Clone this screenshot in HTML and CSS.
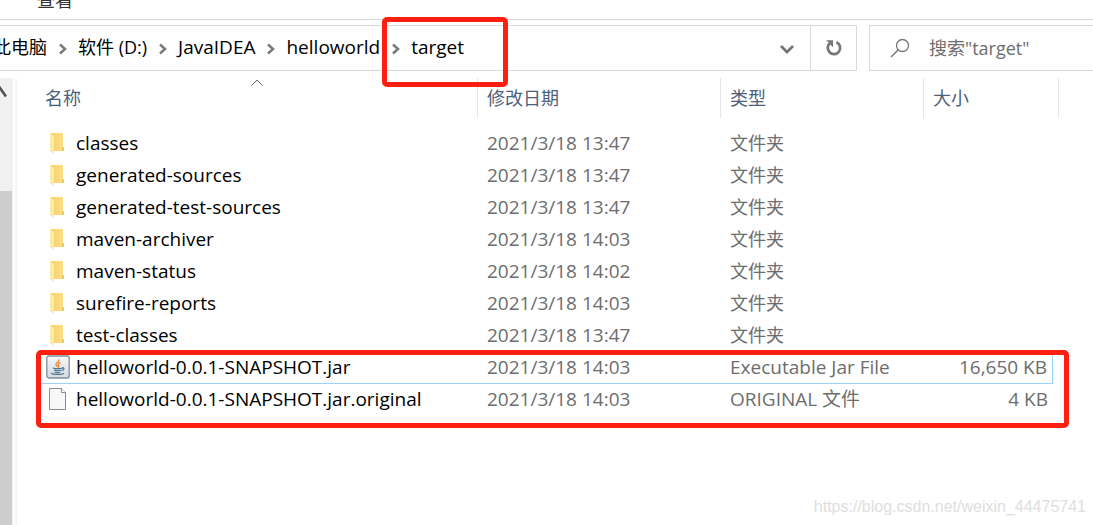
FILE: index.html
```html
<!DOCTYPE html>
<html lang="zh-CN">
<head>
<meta charset="utf-8">
<title>target</title>
<link rel="stylesheet" href="styles.css">
</head>
<body>
<svg class="defs" aria-hidden="true">
  <defs>
    <linearGradient id="fold" x1="0" x2="1"><stop offset="0" stop-color="#f5cf6b"/><stop offset="1" stop-color="#fbdf86"/></linearGradient>
    <linearGradient id="plate" x1="0" y1="0" x2="0" y2="1"><stop offset="0" stop-color="#f7f8f9"/><stop offset="1" stop-color="#d5dbe0"/></linearGradient>
    <symbol id="folder" viewBox="0 0 24 24">
      <path d="M4 2h13v18H8z" fill="url(#fold)"/>
      <path d="M16 16h2v4h-2z" fill="#eec967"/>
      <path d="M4 2l4 3v18l-4-3z" fill="#ffe9a6"/>
    </symbol>
    <symbol id="chevron" viewBox="0 0 8 12"><path d="M1 1.5l5 4.5-5 4.5" fill="none" stroke="#7c7c7c" stroke-width="2.6"/></symbol>
  </defs>
</svg>
<div class="explorer">
  <nav class="ribbon"><button class="tab" type="button">查看</button></nav>
  <div class="toolbar">
    <div class="address">
      <ol class="crumbs">
        <li><a href="#">此电脑</a><svg class="chev"><use href="#chevron"/></svg></li>
        <li><a href="#">软件 (D:)</a><svg class="chev"><use href="#chevron"/></svg></li>
        <li class="latin"><a href="#">JavaIDEA</a><svg class="chev"><use href="#chevron"/></svg></li>
        <li class="latin"><a href="#">helloworld</a><svg class="chev"><use href="#chevron"/></svg></li>
        <li class="latin"><a href="#">target</a></li>
      </ol>
      <button class="history" type="button" aria-label="历史记录"><svg width="16" height="12" viewBox="0 0 16 12"><path d="M2 3l6 6 6-6" fill="none" stroke="#747474" stroke-width="2.8"/></svg></button>
      <button class="refresh" type="button" aria-label="刷新"><svg width="18" height="18" viewBox="0 0 18 18"><path d="M11.500 3.200a6.200 6.200 0 1 1-6 .5" fill="none" stroke="#777" stroke-width="2.700"/><path d="M1 1.200h7v7L6 6.200 4.300 4z" fill="#777"/></svg></button>
    </div>
    <label class="search">
      <svg width="20" height="20" viewBox="0 0 20 20"><circle cx="12.500" cy="7.500" r="6" fill="none" stroke="#777" stroke-width="1.300"/><path d="M8.300 11.800L1 19" stroke="#777" stroke-width="1.500"/></svg>
      <input type="text" aria-label="搜索" placeholder="搜索&quot;target&quot;">
    </label>
  </div>
  <div class="main">
    <div class="scrollbar"><svg width="7" height="13" viewBox="0 0 7 13"><path d="M-5 10.500L0 3l6 8.500" fill="none" stroke="#505050" stroke-width="2.600"/></svg><div class="thumb"></div></div>
    <div class="files">
      <table>
        <colgroup><col class="c-name"><col class="c-date"><col class="c-type"><col class="c-size"><col class="c-end"></colgroup>
        <thead><tr>
          <th><button type="button">名称</button><svg class="sort" width="12" height="7" viewBox="0 0 12 7"><path d="M.5 6.500L6 1l5.500 5.500" fill="none" stroke="#666"/></svg></th>
          <th><button type="button">修改日期</button></th>
          <th><button type="button">类型</button></th>
          <th colspan="2"><button type="button">大小</button></th>
        </tr></thead>
        <tbody>
          <tr><td><span class="file"><svg class="icon"><use href="#folder"/></svg>classes</span></td><td>2021/3/18 13:47</td><td class="kind">文件夹</td><td></td><td></td></tr>
          <tr><td><span class="file"><svg class="icon"><use href="#folder"/></svg>generated-sources</span></td><td>2021/3/18 13:47</td><td class="kind">文件夹</td><td></td><td></td></tr>
          <tr><td><span class="file"><svg class="icon"><use href="#folder"/></svg>generated-test-sources</span></td><td>2021/3/18 13:47</td><td class="kind">文件夹</td><td></td><td></td></tr>
          <tr><td><span class="file"><svg class="icon"><use href="#folder"/></svg>maven-archiver</span></td><td>2021/3/18 14:03</td><td class="kind">文件夹</td><td></td><td></td></tr>
          <tr><td><span class="file"><svg class="icon"><use href="#folder"/></svg>maven-status</span></td><td>2021/3/18 14:02</td><td class="kind">文件夹</td><td></td><td></td></tr>
          <tr><td><span class="file"><svg class="icon"><use href="#folder"/></svg>surefire-reports</span></td><td>2021/3/18 14:03</td><td class="kind">文件夹</td><td></td><td></td></tr>
          <tr><td><span class="file"><svg class="icon"><use href="#folder"/></svg>test-classes</span></td><td>2021/3/18 13:47</td><td class="kind">文件夹</td><td></td><td></td></tr>
          <tr class="focused"><td><span class="file"><svg class="icon" viewBox="0 -1 24 24">
            <rect x=".8" y="0" width="22.400" height="22" rx="2" fill="url(#plate)" stroke="#7e8f9b" stroke-width="1.300"/>
            <path d="M12.500 3.500c2 2-3.500 3.300-2.500 5.200.4.900 1.500 1.400 1.600 2.500M14.500 6.500c-3 1.300-2.600 2.300-1.700 3.300.5.700 0 1.400-.5 1.900" fill="none" stroke="#ee8a3c" stroke-width="1.400"/>
            <path d="M7.500 11.800c-1.500 1 8 1.300 8.800.2M16 11.800c3-.6 2.400 2.300-.6 2.700M8 14c1 .8 5.500.8 7 0M8.700 16c1.300.7 4 .7 5.600 0M6 16.800c-2.500 1.700 9.500 2.500 12 .3" fill="none" stroke="#4d7592" stroke-width="1.200"/>
          </svg>helloworld-0.0.1-SNAPSHOT.jar</span></td><td>2021/3/18 14:03</td><td>Executable Jar File</td><td>16,650 KB</td><td></td></tr>
          <tr><td><span class="file"><svg class="icon" viewBox="0 -1 24 24"><path d="M3.500.5h12l4 4v17h-16z" fill="#f8f8f8" stroke="#8b8b8b"/><path d="M15.500.5v4h4" fill="#fff" stroke="#8b8b8b"/></svg>helloworld-0.0.1-SNAPSHOT.jar.original</span></td><td>2021/3/18 14:03</td><td>ORIGINAL 文件</td><td>4 KB</td><td></td></tr>
        </tbody>
      </table>
    </div>
  </div>
  <div class="mark mark-path"></div>
  <div class="mark mark-files"></div>
  <div class="watermark">https://blog.csdn.net/weixin_44475741</div>
</div>
</body>
</html>
```

FILE: styles.css
```css
* { box-sizing: border-box; }
body {
  margin: 0;
  background: #fff;
  color: #000;
  font: 18px/24px "Open Sans", "Noto Sans CJK SC", sans-serif;
}
button, input { font: inherit; color: inherit; background: none; border: 0; padding: 0; }
a { color: inherit; text-decoration: none; }
svg { display: block; flex: none; }
.defs { position: absolute; width: 0; height: 0; }
.explorer {
  position: relative;
  display: flex;
  flex-direction: column;
  height: 100vh;
  overflow: hidden;
}
.ribbon {
  display: flex;
  align-items: flex-end;
  height: 20px;
  padding: 0 37px 7px;
  border-bottom: 1px solid #d9d9d9;
  color: #333;
}
.toolbar { display: flex; gap: 12px; height: 46px; margin-top: 5px; }
.address {
  display: flex;
  flex: 1;
  min-width: 0;
  border: 1px solid #d9d9d9;
  border-left: 0;
}
.crumbs {
  display: flex;
  flex: 1;
  align-items: center;
  min-width: 0;
  margin: 0;
  padding: 0 0 2px;
  overflow: hidden;
  list-style: none;
  white-space: nowrap;
}
.crumbs li { display: flex; align-items: center; }
.crumbs li:first-child { margin-left: -7px; }
.crumbs .latin { font-size: 19px; }
.chev { width: 8px; height: 12px; margin: 3px 11px 0 12px; }
.history, .refresh { display: flex; align-items: center; justify-content: center; width: 46px; }
.history { padding-top: 2px; }
.refresh { border-left: 1px solid #d9d9d9; }
.search {
  display: flex;
  align-items: center;
  gap: 19px;
  width: 224px;
  padding-left: 20px;
  border: 1px solid #d9d9d9;
  border-right: 0;
}
.search input { width: 100%; min-width: 0; outline: 0; }
.search input::placeholder { color: #6d6d6d; opacity: 1; }
.main { display: flex; flex: 1; min-height: 0; margin-top: 7px; }
.scrollbar {
  display: flex;
  flex-direction: column;
  justify-content: space-between;
  width: 13px;
  padding: 7px 1px 0 0;
  background: #f0f0f0;
}
.thumb { height: 76%; background: #cdcdcd; }
.files { flex: 1; margin-left: 2px; padding-left: 23px; border-left: 2px solid #f5f5f5; }
table { width: 1019px; border-collapse: separate; border-spacing: 0; table-layout: fixed; }
.c-name { width: 438px; }
.c-date { width: 243px; }
.c-type { width: 203px; }
.c-size { width: 129px; }
.c-end { width: 6px; }
th {
  position: relative;
  height: 40px;
  padding: 0 0 0 9px;
  border-right: 1px solid #e5e5e5;
  font-weight: 400;
  text-align: left;
  color: #4c607a;
}
th:first-child { padding-left: 5px; }
.sort { position: absolute; top: 1px; left: 211px; }
tbody::before { content: ""; display: block; height: 10px; }
td {
  height: 32px;
  padding: 0 0 2px 9px;
  border-bottom: 1px solid transparent;
  color: #6d6d6d;
  font-size: 19px;
  white-space: nowrap;
}
.kind { font-size: 18px; }
td:first-child { padding-left: 6px; color: #000; }
td:nth-child(4) { padding-right: 5px; text-align: right; }
.file { display: flex; align-items: center; gap: 6px; }
.icon { width: 24px; height: 24px; }
.focused td:not(:last-child) { border-bottom-color: #99d1ff; }
.focused td:nth-child(4) { border-right: 1px solid #99d1ff; }
.mark { position: absolute; border: 5px solid #ff1f10; border-radius: 5px; pointer-events: none; }
.mark-path { left: 382px; top: 17px; width: 126px; height: 70px; }
.mark-files { left: 36px; top: 350px; width: 1033px; height: 78px; }
.watermark {
  position: absolute;
  right: 7px;
  bottom: 6px;
  font: 16px/24px "Liberation Sans", sans-serif;
  color: #dedede;
}
```
